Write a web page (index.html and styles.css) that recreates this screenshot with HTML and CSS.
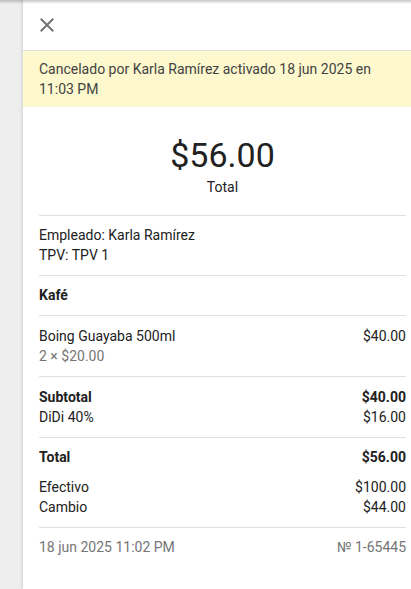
FILE: index.html
```html
<!DOCTYPE html>
<html lang="es">
<head>
<meta charset="utf-8">
<title>Recibo</title>
<link rel="stylesheet" href="styles.css">
</head>
<body>
<div class="topshade"></div>
<div class="gutter"></div>
<main class="panel">
  <header class="head">
    <svg class="close" viewBox="0 0 24 24" width="24" height="24" aria-hidden="true"><path d="M19 6.41 17.59 5 12 10.59 6.41 5 5 6.41 10.59 12 5 17.59 6.41 19 12 13.41 17.59 19 19 17.59 13.41 12z"/></svg>
  </header>
  <div class="banner">Cancelado por Karla Ramírez activado 18 jun 2025 en 11:03 PM</div>
  <div class="body">
    <section class="hero">
      <div class="amount">$56.00</div>
      <div class="amount-label">Total</div>
    </section>
    <section class="sec">
      <div>Empleado: Karla Ramírez</div>
      <div>TPV: TPV 1</div>
    </section>
    <section class="sec">
      <div class="bold">Kafé</div>
    </section>
    <section class="sec wide">
      <div class="row"><span>Boing Guayaba 500ml</span><span>$40.00</span></div>
      <div class="muted">2 × $20.00</div>
    </section>
    <section class="sec wide">
      <div class="row bold"><span>Subtotal</span><span>$40.00</span></div>
      <div class="row"><span>DiDi 40%</span><span>$16.00</span></div>
    </section>
    <section class="sec">
      <div class="row bold"><span>Total</span><span>$56.00</span></div>
      <div class="pay">
        <div class="row"><span>Efectivo</span><span>$100.00</span></div>
        <div class="row"><span>Cambio</span><span>$44.00</span></div>
      </div>
    </section>
    <section class="sec foot">
      <div class="row muted"><span>18 jun 2025 11:02 PM</span><span>№ 1-65445</span></div>
    </section>
  </div>
</main>
</body>
</html>
```
FILE: styles.css
```css
html, body {
  margin: 0;
  padding: 0;
  height: 100%;
}
body {
  display: flex;
  background: #eeeeee;
  font-family: Roboto, "Liberation Sans", Arial, sans-serif;
  font-size: 14px;
  line-height: 20px;
  color: #212121;
  overflow: hidden;
  position: relative;
}
.topshade {
  position: absolute;
  left: 0;
  right: 0;
  top: 0;
  height: 4px;
  background: linear-gradient(rgba(0,0,0,0.22), rgba(0,0,0,0));
  z-index: 2;
}
.gutter {
  width: 23px;
  flex: none;
}
.panel {
  flex: 1;
  background: #fff;
  box-shadow: -1px 0 3px rgba(0,0,0,0.12);
  min-height: 100%;
}
.head {
  height: 50px;
  border-bottom: 1px solid #e0e0e0;
  display: flex;
  align-items: center;
  padding-left: 12px;
}
.close {
  fill: #757575;
  display: block;
}
.banner {
  background: #fdf8cd;
  color: #424242;
  padding: 8px 16px;
  min-height: 40px;
}
.body {
  padding: 0 5px 0 16px;
}
.hero {
  padding: 26px 0 18px;
  text-align: center;
  border-bottom: 1px solid #e0e0e0;
}
.amount {
  font-size: 34px;
  line-height: 44px;
  color: #212121;
}
.amount-label {
  color: #212121;
}
.sec {
  padding: 9px 0 10px;
  border-bottom: 1px solid #e0e0e0;
}
.sec.wide {
  padding: 10px 0;
}
.sec.foot {
  border-bottom: none;
}
.row {
  display: flex;
  justify-content: space-between;
}
.bold {
  font-weight: 700;
}
.muted {
  color: #757575;
}
.pay {
  margin-top: 10px;
}
```
